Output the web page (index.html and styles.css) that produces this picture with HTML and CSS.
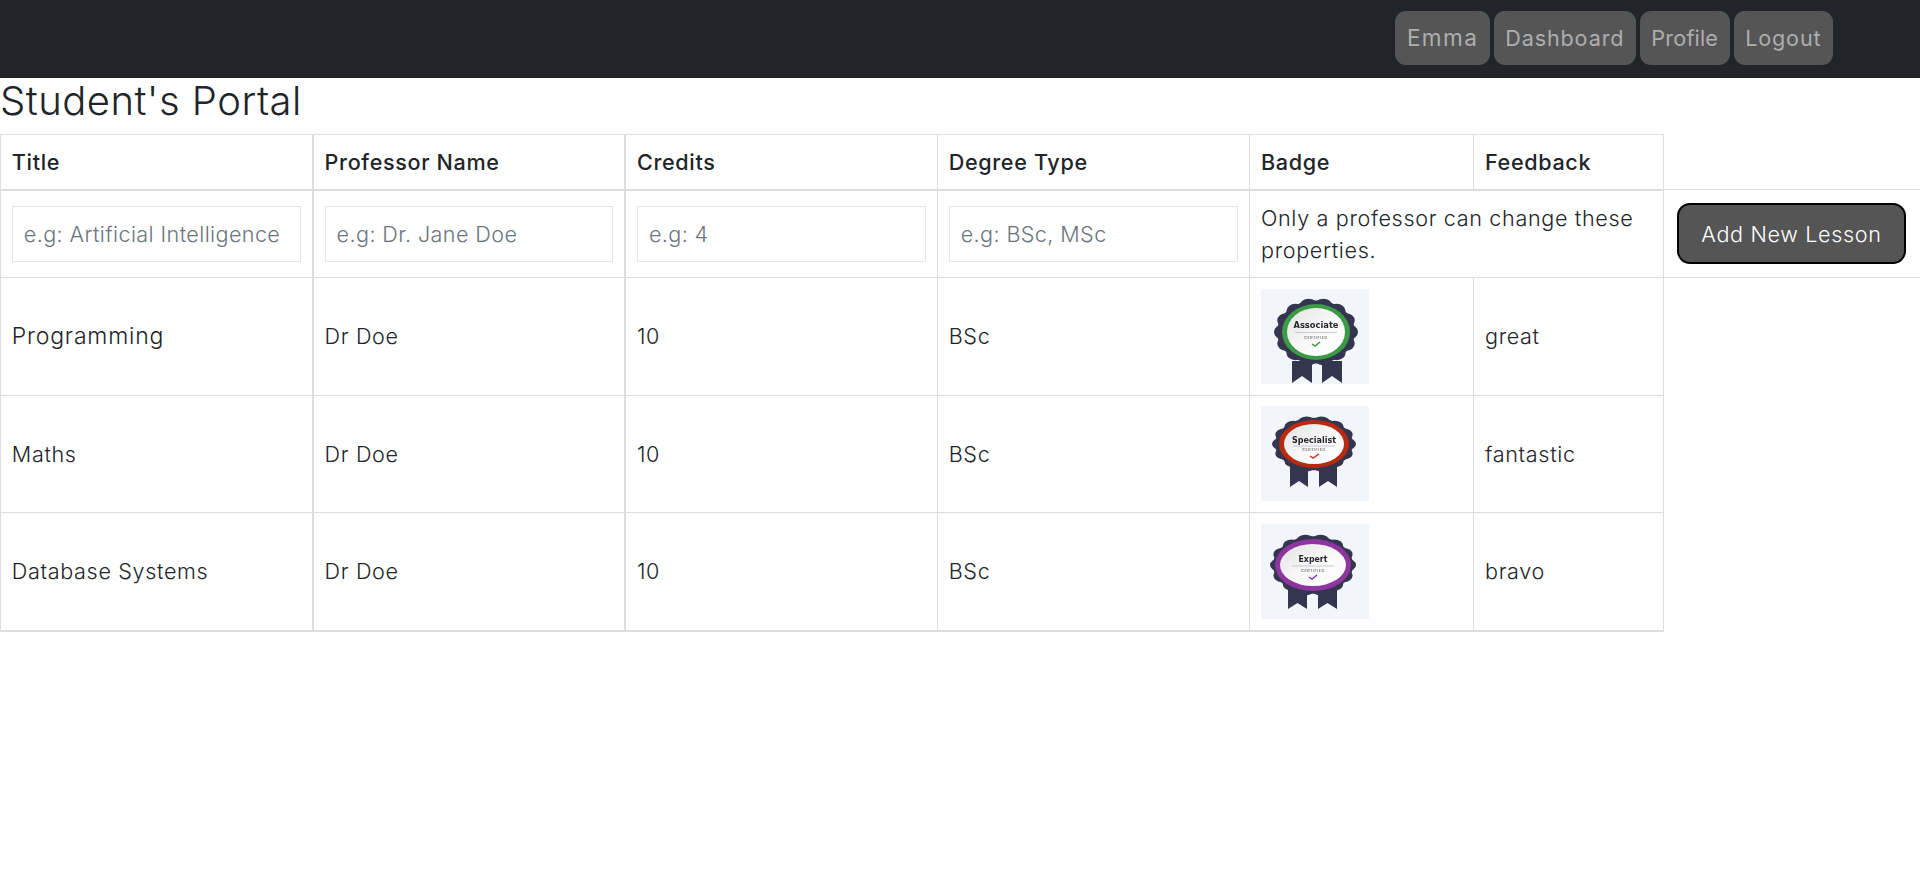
FILE: index.html
```html
<!DOCTYPE html>
<html lang="en">
<head>
<meta charset="utf-8">
<title>Student's Portal</title>
<link rel="stylesheet" href="styles.css">
</head>
<body>
<nav class="navbar">
  <a class="nav-btn nav-short" href="#">Emma</a>
  <a class="nav-btn" href="#">Dashboard</a>
  <a class="nav-btn nav-tight" href="#">Profile</a>
  <a class="nav-btn" href="#">Logout</a>
</nav>
<h1 class="page-title">Student's Portal</h1>
<table class="lessons">
  <colgroup>
    <col class="c-wide"><col class="c-wide"><col class="c-wide"><col class="c-wide">
    <col class="c-badge"><col class="c-feedback"><col class="c-action">
  </colgroup>
  <thead>
    <tr><th>Title</th><th>Professor Name</th><th>Credits</th><th>Degree Type</th><th>Badge</th><th>Feedback</th></tr>
  </thead>
  <tbody>
    <tr class="form-row">
      <td><input class="field" placeholder="e.g: Artificial Intelligence"></td>
      <td><input class="field" placeholder="e.g: Dr. Jane Doe"></td>
      <td><input class="field" placeholder="e.g: 4"></td>
      <td><input class="field" placeholder="e.g: BSc, MSc"></td>
      <td colspan="2">Only a professor can change these properties.</td>
      <td class="action-cell"><button class="add-btn">Add New Lesson</button></td>
    </tr>
    <tr>
      <td class="wide-word">Programming</td><td>Dr Doe</td><td>10</td><td>BSc</td>
      <td class="badge-cell">
        <svg class="badge" viewBox="0 0 108 95" role="img" aria-label="Associate badge">
          <defs>
            <linearGradient id="core-shade" x1="0" y1="0" x2="1" y2="1">
              <stop offset="0" stop-color="#e2e2e2"/>
              <stop offset=".55" stop-color="#fafafa"/>
              <stop offset="1" stop-color="#ffffff"/>
            </linearGradient>
          </defs>
          <rect class="badge-bg" width="108" height="95"/>
          <g class="badge-art">
            <path class="ribbon" d="M31 72H51V94L41 87L31 94Z"/>
            <path class="ribbon" d="M61 72H81V94L71 87L61 94Z"/>
            <g transform="translate(55 43) scale(1 .81)">
              <circle class="seal" r="39"/>
              <circle class="scallop" r="33" pathLength="140"/>
            </g>
            <ellipse class="ring-green" cx="55" cy="43" rx="34" ry="28"/>
            <ellipse fill="url(#core-shade)" cx="55" cy="43" rx="29" ry="24"/>
            <text class="badge-name" x="55" y="39" textLength="45" lengthAdjust="spacingAndGlyphs">Associate</text>
            <line class="badge-rule" x1="34" y1="43.500" x2="76" y2="43.500"/>
            <text class="badge-sub" x="55" y="50">CERTIFIED</text>
            <path class="tick tick-green" d="M51 55L54 57L59 53"/>
          </g>
        </svg>
      </td>
      <td>great</td>
    </tr>
    <tr>
      <td>Maths</td><td>Dr Doe</td><td>10</td><td>BSc</td>
      <td class="badge-cell">
        <svg class="badge" viewBox="0 0 108 95" role="img" aria-label="Specialist badge">
          <rect class="badge-bg" width="108" height="95"/>
          <g class="badge-art">
            <path class="ribbon" d="M29 60H47V81L38 75L29 81Z"/>
            <path class="ribbon" d="M58 60H76V81L67 75L58 81Z"/>
            <g transform="translate(53 38) scale(1 .67)">
              <circle class="seal" r="39"/>
              <circle class="scallop" r="33" pathLength="140"/>
            </g>
            <ellipse class="ring-red" cx="53" cy="38" rx="35" ry="24"/>
            <ellipse fill="url(#core-shade)" cx="53" cy="38" rx="30" ry="20"/>
            <text class="badge-name" x="53" y="37" textLength="44" lengthAdjust="spacingAndGlyphs">Specialist</text>
            <line class="badge-rule" x1="32" y1="40" x2="74" y2="40"/>
            <text class="badge-sub" x="53" y="45">CERTIFIED</text>
            <path class="tick tick-red" d="M49 50L52 52L58 48"/>
          </g>
        </svg>
      </td>
      <td>fantastic</td>
    </tr>
    <tr>
      <td>Database Systems</td><td>Dr Doe</td><td>10</td><td>BSc</td>
      <td class="badge-cell">
        <svg class="badge" viewBox="0 0 108 95" role="img" aria-label="Expert badge">
          <rect class="badge-bg" width="108" height="95"/>
          <g class="badge-art">
            <path class="ribbon" d="M27 64H46V85L36.500 79L27 85Z"/>
            <path class="ribbon" d="M57 64H76V85L66.500 79L57 85Z"/>
            <g transform="translate(52 41) scale(1 .72)">
              <circle class="seal" r="40"/>
              <circle class="scallop" r="34" pathLength="140"/>
            </g>
            <ellipse class="ring-purple" cx="52" cy="41" rx="38" ry="26"/>
            <ellipse fill="url(#core-shade)" cx="52" cy="41" rx="33" ry="21"/>
            <text class="badge-name" x="52" y="38" textLength="29" lengthAdjust="spacingAndGlyphs">Expert</text>
            <line class="badge-rule" x1="31" y1="42" x2="73" y2="42"/>
            <text class="badge-sub" x="52" y="48">CERTIFIED</text>
            <path class="tick tick-purple" d="M48 53L51 55L56 51"/>
          </g>
        </svg>
      </td>
      <td>bravo</td>
    </tr>
  </tbody>
</table>
</body>
</html>
```

FILE: styles.css
```css
* {
  box-sizing: border-box;
}

body {
  margin: 0;
  background: #fff;
  color: #212529;
  font-family: Inter, "Liberation Sans", sans-serif;
  font-size: 21.6px;
  font-weight: 350;
  line-height: 1.5;
  letter-spacing: .03em;
}

.navbar {
  display: flex;
  justify-content: flex-end;
  align-items: center;
  gap: 4px;
  height: 78px;
  padding-right: 87px;
  padding-bottom: 2px;
  background: #212529;
}

.nav-btn {
  padding: 10.8px 11.500px;
  border-radius: 11px;
  background: #555;
  color: #adaeaf;
  font-weight: 400;
  line-height: 32.400px;
  text-decoration: none;
  letter-spacing: .04em;
}

.nav-short {
  font-size: 22.600px;
  letter-spacing: .06em;
}

.nav-tight {
  letter-spacing: .008em;
}

.wide-word {
  font-size: 23px;
  letter-spacing: .035em;
}

.page-title {
  margin: 0 0 10px;
  font-size: 40px;
  font-weight: 300;
  line-height: 46px;
  letter-spacing: .012em;
}

.lessons {
  width: 100%;
  table-layout: fixed;
  border-collapse: collapse;
}

.c-wide { width: 312.3px; }
.c-badge { width: 224px; }
.c-feedback { width: 190px; }
.c-action { width: 256.8px; }

.lessons th,
.lessons td {
  padding: 10.8px;
  border: 1px solid #ddd;
  text-align: left;
  vertical-align: middle;
}

.lessons .form-row td {
  padding-block: 10.6px;
}

.lessons tr > :nth-child(-n+2) {
  border-right-width: 2px;
}

.lessons tbody tr:last-child td {
  border-bottom-width: 2px;
}

.lessons th {
  font-weight: 480;
  border-bottom-width: 2px;
}

.field {
  display: block;
  width: 100%;
  height: 56px;
  padding: 0 11px;
  border: 1px solid #e4e7ea;
  border-radius: 0;
  background: #fff;
  color: #212529;
  font: inherit;
  letter-spacing: .018em;
  outline: 0;
}

.field::placeholder {
  color: #6c757d;
  opacity: 1;
}

.action-cell {
  white-space: nowrap;
}

.add-btn {
  display: block;
  width: 229px;
  height: 61px;
  margin: 0 0 0 2px;
  border: 2px solid #000;
  border-radius: 13px;
  background: #555;
  color: #fff;
  font: inherit;
  letter-spacing: inherit;
}

.badge-cell {
  line-height: 0;
}

.badge {
  display: inline-block;
  width: 108px;
  height: 95px;
}

.badge-bg { fill: #f2f5f9; }
.badge-art { filter: blur(.55px); }
.ribbon { fill: #34354f; }
.seal { fill: #34354f; }

.scallop {
  fill: none;
  stroke: #34354f;
  stroke-width: 18;
  stroke-linecap: round;
  stroke-dasharray: 0 10;
}

.ring-green { fill: #3a9a46; }
.ring-red { fill: #b82a10; }
.ring-purple { fill: #8f35a0; }

.badge-name {
  fill: #26262e;
  font-family: "DejaVu Sans", sans-serif;
  font-size: 8.500px;
  font-weight: 700;
  letter-spacing: 0;
  text-anchor: middle;
}

.badge-sub {
  fill: #55555f;
  font-size: 3.600px;
  font-weight: 500;
  letter-spacing: .16em;
  text-anchor: middle;
}

.badge-rule {
  stroke: #9a9aa2;
  stroke-width: .5;
}

.tick {
  fill: none;
  stroke-width: 1.500;
}

.tick-green { stroke: #3a9a46; }
.tick-red { stroke: #d0341a; }
.tick-purple { stroke: #8f35a0; }
```
